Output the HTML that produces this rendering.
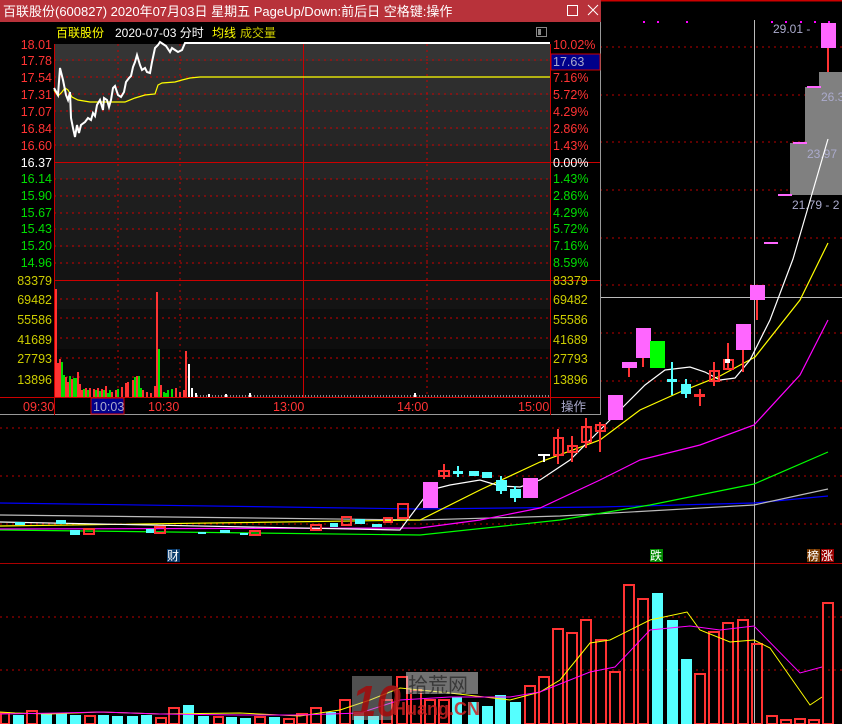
<!DOCTYPE html>
<html><head><meta charset="utf-8">
<style>
html,body{margin:0;padding:0;background:#000;}
#w{position:relative;width:842px;height:724px;overflow:hidden;background:#000;font-family:"Liberation Sans","Noto Sans CJK SC",sans-serif;}
svg text{font-family:"Liberation Sans","Noto Sans CJK SC",sans-serif;}
</style></head><body><div id="w">
<svg width="842" height="724" viewBox="0 0 842 724" xmlns="http://www.w3.org/2000/svg" shape-rendering="crispEdges">
<line x1="0" y1="0.5" x2="842" y2="0.5" stroke="#c00" stroke-width="2"/>
<g stroke="#b00" stroke-dasharray="2,4">
<line x1="0" y1="47" x2="842" y2="47"/><line x1="0" y1="95" x2="842" y2="95"/><line x1="0" y1="142" x2="842" y2="142"/><line x1="0" y1="190" x2="842" y2="190"/><line x1="0" y1="238" x2="842" y2="238"/><line x1="0" y1="285" x2="842" y2="285"/><line x1="0" y1="333" x2="842" y2="333"/><line x1="0" y1="381" x2="842" y2="381"/><line x1="0" y1="428" x2="842" y2="428"/><line x1="0" y1="476" x2="842" y2="476"/><line x1="0" y1="524" x2="842" y2="524"/>
<line x1="0" y1="617" x2="842" y2="617"/><line x1="0" y1="670" x2="842" y2="670"/>
</g>
<line x1="0" y1="563.5" x2="842" y2="563.5" stroke="#a00"/>
<line x1="754.5" y1="20" x2="754.5" y2="724" stroke="#bbb"/>
<line x1="601" y1="297.5" x2="842" y2="297.5" stroke="#bbb"/>
<g fill="#f0f"><rect x="643" y="21" width="2" height="2"/><rect x="657" y="21" width="2" height="2"/><rect x="686" y="21" width="2" height="2"/><rect x="771" y="21" width="2" height="2"/><rect x="785" y="21" width="2" height="2"/><rect x="800" y="21" width="2" height="2"/><rect x="814" y="21" width="2" height="2"/><rect x="828" y="21" width="2" height="2"/></g>
<g fill="#808080"><rect x="790" y="143" width="52" height="52"/><rect x="805" y="87" width="37" height="56"/><rect x="819" y="72" width="23" height="15"/></g>
<g fill="#f6f"><rect x="778" y="194" width="14" height="2"/><rect x="793" y="142" width="14" height="2"/><rect x="807" y="86" width="14" height="2"/><rect x="764" y="242" width="14" height="2"/></g>
<g font-size="12" fill="#aac"><text x="773" y="33">29.01 -</text><text x="821" y="101">26.3</text><text x="807" y="158">23.97</text><text x="792" y="209">21.79 - 2</text></g>
<g fill="none" stroke-width="1.2" shape-rendering="auto">
<polyline stroke="#00f" points="0,503 420,509 600,507 754,503 828,496"/>
<polyline stroke="#bbb" points="0,515 420,520 560,516 754,505 828,489"/>
<polyline stroke="#0f0" points="0,530 420,535 560,520 650,505 754,484 828,452"/>
<polyline stroke="#f0f" points="0,529 420,528 480,520 540,508 600,480 640,460 700,445 754,425 800,375 828,320"/>
<polyline stroke="#ff0" points="0,526 420,520 480,490 540,462 600,440 640,410 680,392 720,376 755,357 800,300 828,243"/>
<polyline stroke="#fff" points="0,522 400,530 430,490 450,485 480,480 500,486 520,487 540,480 570,460 600,430 625,405 645,385 665,370 690,367 705,372 720,380 735,378 750,360 770,320 793,259 828,139"/>
</g>
<g fill="#5ff"><rect x="15" y="522" width="10" height="3"/><rect x="56" y="520" width="10" height="4"/><rect x="70" y="530" width="10" height="5"/><rect x="146" y="529" width="10" height="4"/><rect x="198" y="532" width="8" height="2"/><rect x="220" y="530" width="10" height="3"/><rect x="240" y="533" width="8" height="2"/><rect x="330" y="523" width="8" height="4"/><rect x="355" y="519" width="10" height="5"/><rect x="372" y="524" width="10" height="3"/></g>
<g fill="none" stroke="#f33" stroke-width="2"><rect x="84" y="529" width="10" height="5"/><rect x="155" y="527" width="10" height="6"/><rect x="250" y="531" width="10" height="4"/><rect x="311" y="525" width="10" height="5"/><rect x="342" y="517" width="9" height="8"/><rect x="384" y="518" width="8" height="4"/><rect x="398" y="504" width="10" height="14"/></g>
<g fill="#f6f"><rect x="423" y="482" width="15" height="26"/><rect x="523" y="478" width="15" height="20"/><rect x="608" y="395" width="15" height="25"/><rect x="622" y="362" width="15" height="6"/><rect x="636" y="328" width="15" height="30"/><rect x="736" y="324" width="15" height="26"/><rect x="750" y="285" width="15" height="15"/><rect x="821" y="23" width="15" height="25"/></g>
<g stroke="#f33" stroke-width="2"><line x1="629" y1="368" x2="629" y2="377"/><line x1="643" y1="358" x2="643" y2="367"/><line x1="743" y1="350" x2="743" y2="372"/><line x1="757" y1="300" x2="757" y2="320"/><line x1="828" y1="48" x2="828" y2="72"/><line x1="444" y1="464" x2="444" y2="479"/><line x1="558" y1="429" x2="558" y2="464"/><line x1="572" y1="436" x2="572" y2="462"/><line x1="586" y1="418" x2="586" y2="448"/><line x1="600" y1="422" x2="600" y2="452"/><line x1="700" y1="389" x2="700" y2="406"/><line x1="714" y1="362" x2="714" y2="386"/><line x1="728" y1="343" x2="728" y2="370"/></g>
<g fill="none" stroke="#f33" stroke-width="2"><rect x="439" y="471" width="10" height="5"/><rect x="554" y="438" width="9" height="17"/><rect x="568" y="446" width="9" height="6"/><rect x="582" y="427" width="9" height="15"/><rect x="596" y="425" width="9" height="6"/><rect x="710" y="371" width="9" height="10"/><rect x="724" y="360" width="9" height="9"/></g>
<rect x="694" y="394" width="11" height="3" fill="#f33"/>
<rect x="650" y="341" width="15" height="27" fill="#0f0"/>
<g stroke="#5ff" stroke-width="2"><line x1="458" y1="466" x2="458" y2="477"/><line x1="672" y1="362" x2="672" y2="395"/><line x1="686" y1="379" x2="686" y2="398"/><line x1="501" y1="476" x2="501" y2="494"/><line x1="515" y1="486" x2="515" y2="502"/></g>
<g fill="#5ff"><rect x="453" y="471" width="10" height="3"/><rect x="469" y="471" width="10" height="5"/><rect x="482" y="472" width="10" height="6"/><rect x="496" y="480" width="11" height="11"/><rect x="510" y="489" width="11" height="9"/><rect x="667" y="379" width="10" height="3"/><rect x="681" y="384" width="10" height="10"/></g>
<rect x="538" y="454" width="12" height="2" fill="#fff"/><rect x="543" y="455" width="2" height="7" fill="#fff"/>
<rect x="725" y="359" width="5" height="4" fill="#fff"/>
<rect x="167" y="549" width="13" height="13" fill="#0a3a6a"/><text x="167" y="560" font-size="12" fill="#fff">财</text>
<rect x="650" y="549" width="13" height="13" fill="#080"/><text x="650" y="560" font-size="12" fill="#fff">跌</text>
<rect x="807" y="549" width="13" height="13" fill="#7a3a00"/><text x="807" y="560" font-size="12" fill="#fff">榜</text>
<rect x="821" y="549" width="13" height="13" fill="#900"/><text x="821" y="560" font-size="12" fill="#fff">涨</text>
<g fill="#5ff"><rect x="13" y="715" width="11" height="9"/><rect x="41" y="714" width="11" height="10"/><rect x="56" y="713" width="11" height="11"/><rect x="70" y="715" width="11" height="9"/><rect x="98" y="715" width="11" height="9"/><rect x="112" y="716" width="11" height="8"/><rect x="127" y="716" width="11" height="8"/><rect x="141" y="715" width="11" height="9"/><rect x="183" y="705" width="11" height="19"/><rect x="198" y="716" width="11" height="8"/><rect x="226" y="717" width="11" height="7"/><rect x="240" y="718" width="11" height="6"/><rect x="269" y="717" width="11" height="7"/><rect x="326" y="712" width="10" height="12"/><rect x="354" y="712" width="10" height="12"/><rect x="368" y="716" width="11" height="8"/><rect x="452" y="697" width="10" height="27"/><rect x="468" y="702" width="11" height="22"/><rect x="482" y="706" width="11" height="18"/><rect x="495" y="695" width="11" height="29"/><rect x="510" y="702" width="11" height="22"/><rect x="652" y="593" width="11" height="131"/><rect x="667" y="620" width="11" height="104"/><rect x="681" y="659" width="11" height="65"/></g>
<g fill="none" stroke="#f33" stroke-width="2"><rect x="1" y="713" width="8" height="11"/><rect x="27" y="711" width="10" height="13"/><rect x="85" y="716" width="10" height="8"/><rect x="156" y="718" width="10" height="6"/><rect x="169" y="708" width="10" height="16"/><rect x="214" y="717" width="9" height="7"/><rect x="255" y="717" width="10" height="7"/><rect x="284" y="719" width="10" height="5"/><rect x="297" y="714" width="10" height="10"/><rect x="311" y="708" width="10" height="16"/><rect x="340" y="700" width="10" height="24"/><rect x="382" y="700" width="10" height="24"/><rect x="397" y="677" width="10" height="47"/><rect x="411" y="690" width="10" height="34"/><rect x="425" y="700" width="10" height="24"/><rect x="439" y="700" width="10" height="24"/><rect x="525" y="686" width="10" height="38"/><rect x="539" y="677" width="10" height="47"/><rect x="553" y="629" width="10" height="95"/><rect x="567" y="633" width="10" height="91"/><rect x="581" y="620" width="10" height="104"/><rect x="596" y="640" width="10" height="84"/><rect x="610" y="672" width="10" height="52"/><rect x="624" y="585" width="10" height="139"/><rect x="638" y="599" width="10" height="125"/><rect x="695" y="674" width="10" height="50"/><rect x="709" y="632" width="10" height="92"/><rect x="723" y="623" width="10" height="101"/><rect x="738" y="620" width="10" height="104"/><rect x="752" y="644" width="10" height="80"/><rect x="767" y="716" width="10" height="8"/><rect x="781" y="720" width="10" height="4"/><rect x="795" y="719" width="10" height="5"/><rect x="809" y="720" width="10" height="4"/><rect x="823" y="603" width="10" height="121"/></g>
<g fill="none" stroke-width="1" shape-rendering="auto">
<polyline stroke="#ff0" points="0,712 15,713 50,714 100,712 160,714 240,713 300,716 340,710 370,700 400,688 450,693 510,700 540,692 560,680 590,643 610,640 650,620 687,612 700,630 730,642 754,640 770,648 810,705 822,697"/>
<polyline stroke="#f0f" points="0,714 60,713 100,712 160,714 240,715 300,715 360,713 400,700 450,697 510,697 540,692 590,672 615,667 650,630 690,626 720,630 754,626 800,673 822,667"/>
</g>
<g opacity="0.85">
<rect x="352" y="676" width="40" height="44" fill="#bbb" opacity="0.5"/>
<text x="352" y="716" font-size="44" font-weight="bold" fill="#b01818" font-style="italic">10</text>
<rect x="406" y="672" width="72" height="22" fill="#ddd" opacity="0.6"/>
<text x="408" y="692" font-size="20" fill="#444">拾荒网</text>
<text x="393" y="715" font-size="18" font-weight="bold" fill="#c22">Huang.CN</text>
</g>
<rect x="0" y="0" width="601" height="415" fill="#000"/>
<rect x="0" y="0" width="601" height="22" fill="#b8323a"/>
<text x="3" y="16" font-size="13" fill="#fff">百联股份(600827) 2020年07月03日 星期五 PageUp/Down:前后日 空格键:操作</text>
<rect x="567.5" y="5.5" width="10" height="10" fill="none" stroke="#fff"/>
<path d="M588 5 L598 15 M598 5 L588 15" stroke="#fff" shape-rendering="auto"/>
<line x1="600.5" y1="22" x2="600.5" y2="415" stroke="#999"/>
<line x1="0" y1="414.5" x2="601" y2="414.5" stroke="#999"/>
<text x="56" y="37" font-size="12" fill="#ff0">百联股份</text>
<text x="115" y="37" font-size="12" fill="#fff">2020-07-03 分时</text>
<text x="212" y="37" font-size="12" fill="#ff0">均线</text>
<text x="240" y="37" font-size="12" fill="#cc0">成交量</text>
<rect x="536.5" y="27.5" width="10" height="9" fill="none" stroke="#888"/><rect x="538" y="29" width="3" height="6" fill="#888"/>
<rect x="54" y="44" width="496" height="17" fill="#353535"/><rect x="54" y="61" width="496" height="17" fill="#303030"/><rect x="54" y="78" width="496" height="17" fill="#2e2e2e"/><rect x="54" y="95" width="496" height="17" fill="#2a2a2a"/><rect x="54" y="112" width="496" height="17" fill="#282828"/><rect x="54" y="129" width="496" height="17" fill="#262626"/><rect x="54" y="146" width="496" height="16" fill="#222"/>
<rect x="54" y="162" width="496" height="17" fill="#262626"/><rect x="54" y="179" width="496" height="17" fill="#202020"/><rect x="54" y="196" width="496" height="17" fill="#1e1e1e"/><rect x="54" y="213" width="496" height="17" fill="#1c1c1c"/><rect x="54" y="230" width="496" height="17" fill="#1a1a1a"/><rect x="54" y="247" width="496" height="17" fill="#161616"/><rect x="54" y="264" width="496" height="16" fill="#141414"/>
<rect x="54" y="280" width="496" height="29" fill="#141414"/><rect x="54" y="309" width="496" height="40" fill="#0e0e0e"/><rect x="54" y="349" width="496" height="48" fill="#080808"/>
<g stroke="#c00" stroke-dasharray="2,4">
<line x1="54" y1="60" x2="550" y2="60"/><line x1="54" y1="77" x2="550" y2="77"/><line x1="54" y1="94" x2="550" y2="94"/><line x1="54" y1="111" x2="550" y2="111"/><line x1="54" y1="128" x2="550" y2="128"/><line x1="54" y1="145" x2="550" y2="145"/><line x1="54" y1="179" x2="550" y2="179"/><line x1="54" y1="196" x2="550" y2="196"/><line x1="54" y1="213" x2="550" y2="213"/><line x1="54" y1="229" x2="550" y2="229"/><line x1="54" y1="246" x2="550" y2="246"/><line x1="54" y1="263" x2="550" y2="263"/>
<line x1="54" y1="299" x2="550" y2="299"/><line x1="54" y1="318" x2="550" y2="318"/><line x1="54" y1="338" x2="550" y2="338"/><line x1="54" y1="358" x2="550" y2="358"/><line x1="54" y1="377" x2="550" y2="377"/>
<line x1="118" y1="44" x2="118" y2="397"/><line x1="180" y1="44" x2="180" y2="397"/><line x1="427" y1="44" x2="427" y2="397"/>
</g>
<g stroke="#c00"><line x1="54.5" y1="44" x2="54.5" y2="415"/><line x1="550.5" y1="44" x2="550.5" y2="415"/><line x1="303.5" y1="44" x2="303.5" y2="397"/><line x1="54" y1="162.5" x2="600" y2="162.5"/><line x1="54" y1="280.5" x2="600" y2="280.5"/><line x1="0" y1="397.5" x2="600" y2="397.5"/></g>
<g fill="none" shape-rendering="auto">
<polyline stroke="#ff0" stroke-width="1.2" points="54,90 58,96 62,92 65,88 68,90 72,97 78,100 90,102 110,102 125,102 135,98 145,95 155,94 158,85 162,83 175,82 182,80 190,78 200,77 300,77 550,77"/>
<polyline stroke="#fff" stroke-width="2" points="54,88 58,95 60,68 63,80 66,95 68,100 70,92 71,118 73,128 75,137 77,125 79,133 81,125 85,122 88,118 91,120 93,113 95,116 97,105 100,100 103,110 104,98 107,100 109,107 111,100 113,88 115,86 118,95 121,97 124,92 126,82 129,78 131,76 133,67 135,62 137,55 140,65 142,70 145,68 147,72 150,73 152,62 155,48 158,45 160,42 163,44 166,46 170,52 172,48 175,50 178,52 182,50 185,43 190,43 550,43"/>
</g>
<g stroke-width="1.6">
<g stroke="#f33"><line x1="56" y1="289" x2="56" y2="397"/><line x1="58" y1="363" x2="58" y2="397"/><line x1="60" y1="359" x2="60" y2="397"/><line x1="66" y1="377" x2="66" y2="397"/><line x1="68" y1="382" x2="68" y2="397"/><line x1="72" y1="379" x2="72" y2="397"/><line x1="78" y1="372" x2="78" y2="397"/><line x1="80" y1="384" x2="80" y2="397"/><line x1="82" y1="390" x2="82" y2="397"/><line x1="86" y1="388" x2="86" y2="397"/><line x1="90" y1="388" x2="90" y2="397"/><line x1="94" y1="389" x2="94" y2="397"/><line x1="98" y1="388" x2="98" y2="397"/><line x1="102" y1="389" x2="102" y2="397"/><line x1="106" y1="386" x2="106" y2="397"/><line x1="112" y1="392" x2="112" y2="397"/><line x1="116" y1="390" x2="116" y2="397"/><line x1="122" y1="387" x2="122" y2="397"/><line x1="126" y1="383" x2="126" y2="397"/><line x1="128" y1="382" x2="128" y2="397"/><line x1="133" y1="380" x2="133" y2="397"/><line x1="137" y1="376" x2="137" y2="397"/><line x1="143" y1="390" x2="143" y2="397"/><line x1="147" y1="392" x2="147" y2="397"/><line x1="151" y1="393" x2="151" y2="397"/><line x1="155" y1="386" x2="155" y2="397"/><line x1="157" y1="292" x2="157" y2="397"/><line x1="161" y1="385" x2="161" y2="397"/><line x1="176" y1="388" x2="176" y2="397"/><line x1="180" y1="392" x2="180" y2="397"/><line x1="184" y1="390" x2="184" y2="397"/><line x1="186" y1="351" x2="186" y2="397"/></g>
<g stroke="#0d0"><line x1="62" y1="362" x2="62" y2="397"/><line x1="64" y1="375" x2="64" y2="397"/><line x1="70" y1="376" x2="70" y2="397"/><line x1="74" y1="378" x2="74" y2="397"/><line x1="76" y1="378" x2="76" y2="397"/><line x1="84" y1="389" x2="84" y2="397"/><line x1="88" y1="390" x2="88" y2="397"/><line x1="96" y1="390" x2="96" y2="397"/><line x1="100" y1="391" x2="100" y2="397"/><line x1="104" y1="390" x2="104" y2="397"/><line x1="108" y1="393" x2="108" y2="397"/><line x1="110" y1="390" x2="110" y2="397"/><line x1="118" y1="389" x2="118" y2="397"/><line x1="135" y1="377" x2="135" y2="397"/><line x1="139" y1="376" x2="139" y2="397"/><line x1="141" y1="388" x2="141" y2="397"/><line x1="159" y1="349" x2="159" y2="397"/><line x1="164" y1="392" x2="164" y2="397"/><line x1="166" y1="393" x2="166" y2="397"/><line x1="168" y1="390" x2="168" y2="397"/><line x1="172" y1="389" x2="172" y2="397"/></g>
<g stroke="#fff"><line x1="189" y1="364" x2="189" y2="397"/><line x1="192" y1="388" x2="192" y2="397"/><line x1="196" y1="393" x2="196" y2="397"/><line x1="209" y1="394" x2="209" y2="397"/><line x1="250" y1="393" x2="250" y2="397"/><line x1="226" y1="394" x2="226" y2="397"/><line x1="415" y1="393" x2="415" y2="397"/></g>
<line x1="197" y1="396" x2="550" y2="396" stroke="#fff" stroke-width="1" stroke-dasharray="1,2"/>
</g>
<g font-size="12.5" text-anchor="end">
<g fill="#f33"><text x="52" y="49">18.01</text><text x="52" y="65">17.78</text><text x="52" y="82">17.54</text><text x="52" y="99">17.31</text><text x="52" y="116">17.07</text><text x="52" y="133">16.84</text><text x="52" y="150">16.60</text></g>
<text x="52" y="167" fill="#fff">16.37</text>
<g fill="#0d0"><text x="52" y="183">16.14</text><text x="52" y="200">15.90</text><text x="52" y="217">15.67</text><text x="52" y="233">15.43</text><text x="52" y="250">15.20</text><text x="52" y="267">14.96</text></g>
<g fill="#cc0"><text x="52" y="285">83379</text><text x="52" y="304">69482</text><text x="52" y="324">55586</text><text x="52" y="344">41689</text><text x="52" y="363">27793</text><text x="52" y="384">13896</text></g>
</g>
<rect x="551" y="54" width="49" height="16" fill="#00008a" stroke="#c00"/>
<g font-size="12.5">
<g fill="#f33"><text x="553" y="49">10.02%</text><text x="553" y="82">7.16%</text><text x="553" y="99">5.72%</text><text x="553" y="116">4.29%</text><text x="553" y="133">2.86%</text><text x="553" y="150">1.43%</text></g>
<text x="553" y="66" fill="#aac">17.63</text>
<text x="553" y="167" fill="#fff">0.00%</text>
<g fill="#0d0"><text x="553" y="183">1.43%</text><text x="553" y="200">2.86%</text><text x="553" y="217">4.29%</text><text x="553" y="233">5.72%</text><text x="553" y="250">7.16%</text><text x="553" y="267">8.59%</text></g>
<g fill="#cc0"><text x="553" y="285">83379</text><text x="553" y="304">69482</text><text x="553" y="324">55586</text><text x="553" y="344">41689</text><text x="553" y="363">27793</text><text x="553" y="384">13896</text></g>
</g>
<rect x="91" y="398" width="33" height="16" fill="#00008a" stroke="#c00"/>
<g font-size="12.5" fill="#f33"><text x="23" y="411">09:30</text><text x="148" y="411">10:30</text><text x="273" y="411">13:00</text><text x="397" y="411">14:00</text><text x="518" y="411">15:00</text></g>
<text x="93" y="411" font-size="12.5" fill="#aac">10:03</text>
<text x="561" y="411" font-size="12.5" fill="#aac">操作</text>
</svg>
</div></body></html>
